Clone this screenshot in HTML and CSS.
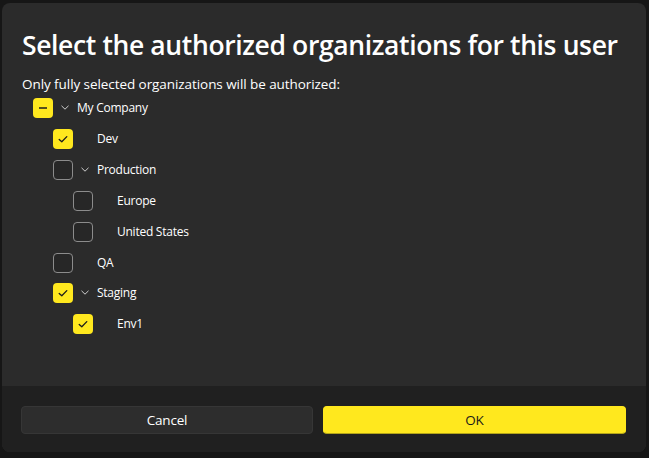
FILE: index.html
```html
<!DOCTYPE html>
<html lang="en">
<head>
<meta charset="utf-8">
<title>Authorized organizations</title>
<link rel="stylesheet" href="styles.css">
</head>
<body>
<div class="dialog">
  <div class="content">
    <h1 class="title">Select the authorized organizations for this user</h1>
    <p class="subtitle">Only fully selected organizations will be authorized:</p>
    <ul class="tree">
      <li class="row lvl0">
        <span class="box on"><svg viewBox="0 0 20 20" width="20" height="20"><path d="M6 10h8" class="mark dash"/></svg></span>
        <span class="chev"><svg viewBox="0 0 8 5" width="8" height="5"><path d="M0.5 0.8L4 4.2L7.5 0.8"/></svg></span>
        <span class="label">My Company</span>
      </li>
      <li class="row lvl1">
        <span class="box on"><svg viewBox="0 0 20 20" width="20" height="20"><path d="M6.2 10.4L8.8 12.8L13.8 7.6" class="mark"/></svg></span>
        <span class="chev"></span>
        <span class="label">Dev</span>
      </li>
      <li class="row lvl1">
        <span class="box"></span>
        <span class="chev"><svg viewBox="0 0 8 5" width="8" height="5"><path d="M0.5 0.8L4 4.2L7.5 0.8"/></svg></span>
        <span class="label">Production</span>
      </li>
      <li class="row lvl2">
        <span class="box"></span>
        <span class="chev"></span>
        <span class="label">Europe</span>
      </li>
      <li class="row lvl2">
        <span class="box"></span>
        <span class="chev"></span>
        <span class="label">United States</span>
      </li>
      <li class="row lvl1">
        <span class="box"></span>
        <span class="chev"></span>
        <span class="label">QA</span>
      </li>
      <li class="row lvl1">
        <span class="box on"><svg viewBox="0 0 20 20" width="20" height="20"><path d="M6.2 10.4L8.8 12.8L13.8 7.6" class="mark"/></svg></span>
        <span class="chev"><svg viewBox="0 0 8 5" width="8" height="5"><path d="M0.5 0.8L4 4.2L7.5 0.8"/></svg></span>
        <span class="label">Staging</span>
      </li>
      <li class="row lvl2">
        <span class="box on"><svg viewBox="0 0 20 20" width="20" height="20"><path d="M6.2 10.4L8.8 12.8L13.8 7.6" class="mark"/></svg></span>
        <span class="chev"></span>
        <span class="label">Env1</span>
      </li>
    </ul>
  </div>
  <div class="footer">
    <button class="btn cancel">Cancel</button>
    <button class="btn ok">OK</button>
  </div>
</div>
</body>
</html>
```

FILE: styles.css
```css
* { box-sizing: border-box; }
html, body { margin: 0; padding: 0; }
body {
  background: #161616;
  width: 649px;
  height: 458px;
  overflow: hidden;
  font-family: "Open Sans", "Noto Sans", "Liberation Sans", sans-serif;
  color: #ffffff;
}
.dialog {
  margin: 3px 3px 0 2px;
  width: 644px;
  height: 449px;
  background: #2b2b2b;
  border-radius: 8px;
  overflow: hidden;
  display: flex;
  flex-direction: column;
}
.content {
  flex: 1;
  padding: 24px 20px 0 20px;
}
.title {
  margin: 0;
  font-size: 26.5px;
  font-weight: 600;
  line-height: 36px;
  letter-spacing: -0.375px;
  white-space: nowrap;
}
.subtitle {
  margin: 12px 0 0 0;
  font-size: 13.5px;
  line-height: 18px;
  letter-spacing: -0.07px;
}
.tree {
  list-style: none;
  margin: 0;
  padding: 0;
}
.row {
  display: flex;
  align-items: center;
  height: 30.85px;
}
.lvl0 { padding-left: 11px; }
.lvl1 { padding-left: 31px; }
.lvl2 { padding-left: 51px; }
.box {
  width: 20px;
  height: 20px;
  border-radius: 4px;
  border: 1px solid #8c8c8c;
  background: #272727;
  flex: none;
  display: flex;
}
.box.on {
  border: none;
  background: #ffe81e;
}
.mark {
  fill: none;
  stroke: #1c1c1c;
  stroke-width: 1.3;
  stroke-linecap: round;
  stroke-linejoin: round;
}
.mark.dash { stroke-width: 1.6; stroke-linecap: butt; }
.chev {
  width: 24px;
  flex: none;
  display: flex;
  align-items: center;
  padding-left: 7.5px;
  margin-top: -2px;
}
.chev path {
  fill: none;
  stroke: #cfcfcf;
  stroke-width: 1;
}
.label {
  font-size: 12px;
  letter-spacing: -0.25px;
  line-height: 16px;
}
.footer {
  height: 66px;
  background: #202020;
  padding: 20px 20px 0 19px;
  display: grid;
  grid-template-columns: 292px 1fr;
  column-gap: 10px;
  align-items: start;
}
.btn {
  height: 28px;
  border-radius: 4px;
  font-family: "Open Sans", "Noto Sans", "Liberation Sans", sans-serif;
  font-size: 13.5px;
  letter-spacing: -0.2px;
  padding: 0;
  cursor: pointer;
}
.cancel {
  background: #2d2d2d;
  border: 1px solid #363636;
  color: #ffffff;
}
.ok {
  background: #ffe81e;
  border: 1px solid #ffe81e;
  border-bottom-color: #b3a41a;
  color: #1a1a1a;
}
```
